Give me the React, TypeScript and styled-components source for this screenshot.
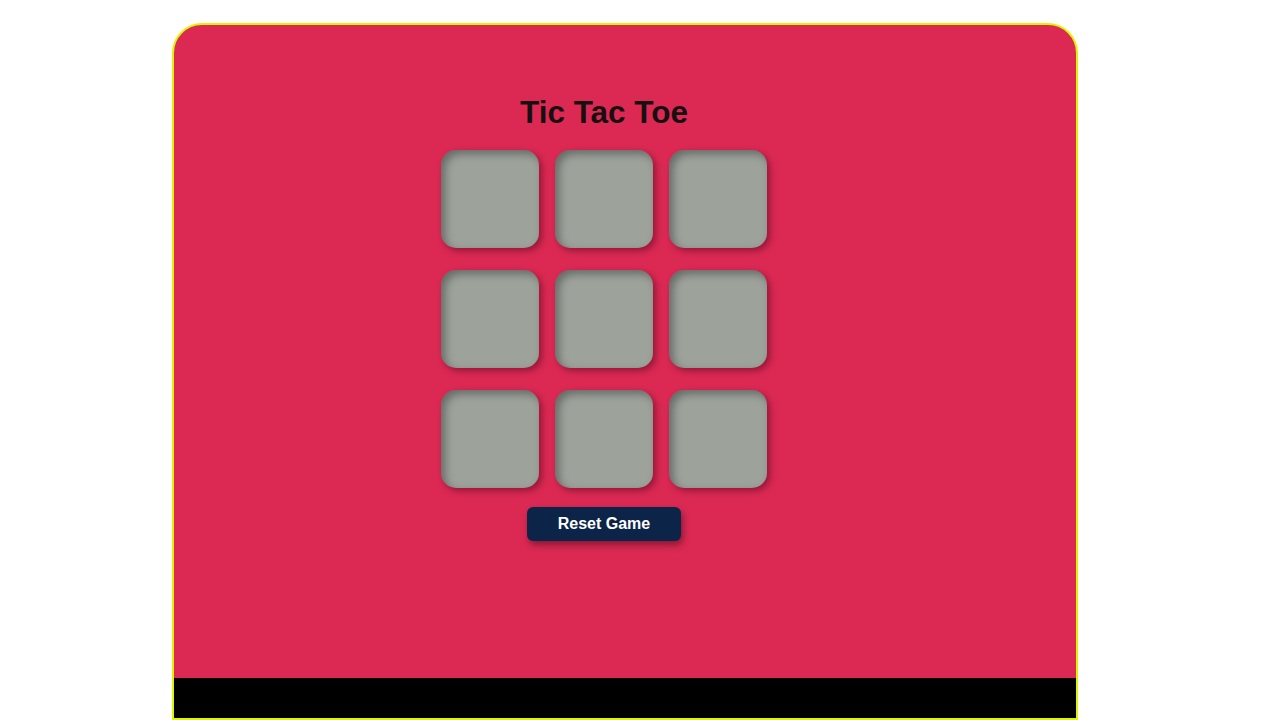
import React, { useState } from "react";
import styled, { createGlobalStyle } from "styled-components";

const GlobalStyle = createGlobalStyle`
  html, body {
    margin: 0;
    padding: 0;
    background: #ffffff;
    font-family: "Liberation Sans", Arial, sans-serif;
  }
  * { box-sizing: border-box; }
`;

const Page = styled.div`
  width: 1280px;
  height: 720px;
  overflow: hidden;
  padding: 23px 0 0 172px;
`;

const Frame = styled.div`
  width: 906px;
  height: 697px;
  display: flex;
  flex-direction: column;
  background: #dc2954;
  border: 2px solid #dcf500;
  border-radius: 30px 30px 0 0;
  overflow: hidden;
`;

const Main = styled.main`
  flex: 1;
  display: flex;
  flex-direction: column;
  align-items: center;
  padding: 69px 42px 0 0;
`;

const Title = styled.h1`
  margin: 0 0 19px;
  font-size: 31.5px;
  line-height: 37px;
  font-weight: 700;
  color: #161010;
`;

const Board = styled.div`
  display: grid;
  grid-template-columns: repeat(3, 98px);
  grid-auto-rows: 98px;
  column-gap: 16px;
  row-gap: 22px;
`;

const Cell = styled.button`
  width: 98px;
  height: 98px;
  border: none;
  padding: 0;
  border-radius: 15px;
  background: #9da29b;
  box-shadow: inset 4px 4px 8px rgba(0, 0, 0, 0.35),
    3px 3px 7px rgba(60, 0, 20, 0.45);
  font-family: "Liberation Sans", Arial, sans-serif;
  font-size: 48px;
  font-weight: 700;
  color: #161010;
  cursor: pointer;
`;

const ResetButton = styled.button`
  margin-top: 19px;
  width: 154px;
  height: 34px;
  border: none;
  border-radius: 6px;
  background: #0b2447;
  color: #ffffff;
  font-family: "Liberation Sans", Arial, sans-serif;
  font-size: 16px;
  font-weight: 700;
  box-shadow: 2px 4px 7px rgba(40, 0, 10, 0.45);
  cursor: pointer;
`;

const Footer = styled.footer`
  height: 40px;
  background: #000000;
  flex-shrink: 0;
`;

export default function App() {
  const [cells, setCells] = useState<string[]>(Array(9).fill(""));
  const [turn, setTurn] = useState<"X" | "O">("X");

  const play = (i: number) => {
    if (cells[i]) return;
    const next = [...cells];
    next[i] = turn;
    setCells(next);
    setTurn(turn === "X" ? "O" : "X");
  };

  const reset = () => {
    setCells(Array(9).fill(""));
    setTurn("X");
  };

  return (
    <>
      <GlobalStyle />
      <Page>
        <Frame>
          <Main>
            <Title>Tic Tac Toe</Title>
            <Board>
              {cells.map((c, i) => (
                <Cell key={i} onClick={() => play(i)}>
                  {c}
                </Cell>
              ))}
            </Board>
            <ResetButton onClick={reset}>Reset Game</ResetButton>
          </Main>
          <Footer />
        </Frame>
      </Page>
    </>
  );
}
